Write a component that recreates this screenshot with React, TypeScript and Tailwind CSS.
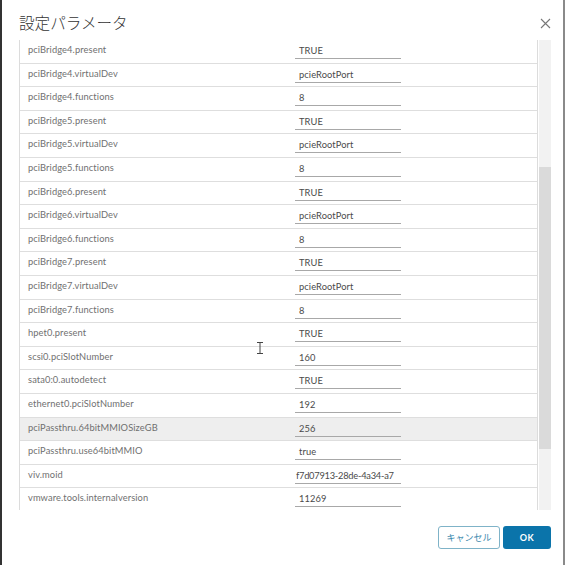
import React from 'react';

type Row = { name: string; value: string; active?: boolean; tight?: boolean };

const rows: Row[] = [
  { name: 'pciBridge4.present', value: 'TRUE' },
  { name: 'pciBridge4.virtualDev', value: 'pcieRootPort' },
  { name: 'pciBridge4.functions', value: '8' },
  { name: 'pciBridge5.present', value: 'TRUE' },
  { name: 'pciBridge5.virtualDev', value: 'pcieRootPort' },
  { name: 'pciBridge5.functions', value: '8' },
  { name: 'pciBridge6.present', value: 'TRUE' },
  { name: 'pciBridge6.virtualDev', value: 'pcieRootPort' },
  { name: 'pciBridge6.functions', value: '8' },
  { name: 'pciBridge7.present', value: 'TRUE' },
  { name: 'pciBridge7.virtualDev', value: 'pcieRootPort' },
  { name: 'pciBridge7.functions', value: '8' },
  { name: 'hpet0.present', value: 'TRUE' },
  { name: 'scsi0.pciSlotNumber', value: '160' },
  { name: 'sata0:0.autodetect', value: 'TRUE' },
  { name: 'ethernet0.pciSlotNumber', value: '192' },
  { name: 'pciPassthru.64bitMMIOSizeGB', value: '256', active: true },
  { name: 'pciPassthru.use64bitMMIO', value: 'true' },
  { name: 'viv.moid', value: 'f7d07913-28de-4a34-a7', tight: true },
  { name: 'vmware.tools.internalversion', value: '11269' },
];

const ParamRow = ({ row }: { row: Row }) => (
  <div
    className={`flex h-[23.6px] shrink-0 border-b border-[#dedede] ${row.active ? 'bg-[#eeeeee]' : 'bg-white'}`}
  >
    <div className="w-[275px] pl-[8px] pt-[4px] text-[9.3px] leading-[12px] tracking-[0.1px] text-[#707070] whitespace-nowrap">
      {row.name}
    </div>
    <div
      className={`w-[106px] h-[19px] border-b border-[#a8a8a8] pt-[5px] text-[9.3px] leading-[12px] text-[#4a4a4a] whitespace-nowrap overflow-hidden ${
        row.tight ? 'pl-[1px] tracking-[-0.25px]' : 'pl-[4px] tracking-[0.1px]'
      }`}
    >
      {row.value}
    </div>
  </div>
);

export default function App() {
  return (
    <div className="relative w-[567px] h-[565px] bg-white font-['Lato','Noto_Sans_CJK_JP',sans-serif]">
      <div className="flex flex-col h-full w-[565px] border-l-2 border-l-[#333] border-r-2 border-r-[#8a8a8a]">
        {/* ヘッダー */}
        <div className="flex h-[40px] shrink-0 items-start justify-between pl-[17px] pr-[12px]">
          <h1 className="pt-[10px] text-[15.6px] leading-[24px] font-light text-[#333] font-['Noto_Sans_CJK_JP',sans-serif]">
            設定パラメータ
          </h1>
          <button type="button" className="mt-[17px] w-[12px] h-[12px] flex items-center justify-center">
            <svg width="11" height="11" viewBox="0 0 11 11" fill="none" stroke="#777" strokeWidth="1.1">
              <path d="M1 1 L10 10 M10 1 L1 10" />
            </svg>
          </button>
        </div>

        {/* パラメータ一覧 */}
        <div className="flex h-[470px] shrink-0 pl-[17px]">
          <div className="flex flex-col w-[519px] overflow-hidden border-l border-r border-[#dcdcdc]">
            {rows.map((r) => (
              <ParamRow key={r.name} row={r} />
            ))}
          </div>
          <div className="flex flex-col w-[12px] ml-[1px] bg-[#f2f2f2]">
            <div className="h-[127px] shrink-0" />
            <div className="h-[282px] shrink-0 bg-[#dadada]" />
          </div>
        </div>

        {/* フッター */}
        <div className="flex justify-end gap-[3px] pt-[16px] pr-[12px]">
          <button
            type="button"
            className="w-[62px] h-[23px] rounded-[3px] border border-[#7fb3c8] bg-white text-[9px] text-[#3a88ad] font-['Noto_Sans_CJK_JP',sans-serif]"
          >
            キャンセル
          </button>
          <button
            type="button"
            className="w-[48px] h-[23px] rounded-[3px] bg-[#0b74aa] text-[9px] font-bold text-white tracking-[0.5px]"
          >
            OK
          </button>
        </div>
      </div>

      {/* マウスカーソル */}
      <svg
        className="absolute left-[256px] top-[342px]"
        width="8"
        height="12"
        viewBox="0 0 8 12"
        fill="none"
        stroke="#444"
        strokeWidth="1"
      >
        <path d="M1 0.5 H7 M1 11.5 H7 M4 0.5 V11.5" />
      </svg>
    </div>
  );
}
